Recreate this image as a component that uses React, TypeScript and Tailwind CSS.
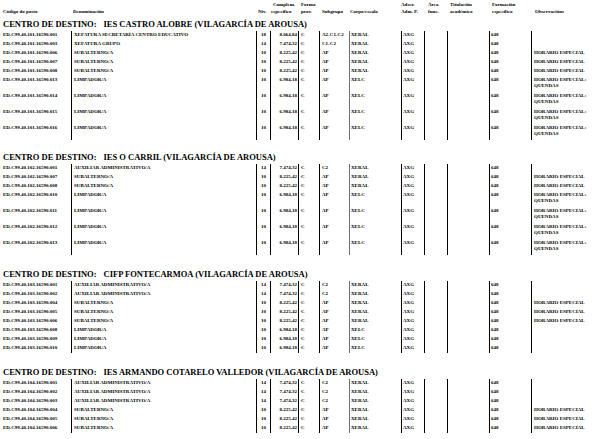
type Row = {
  code: string;
  name: string;
  niv: string;
  comp: string;
  sub: string;
  corpo: string;
  obs: string[];
};

type Section = { centro: string; rows: Row[] };

const aux = (code: string): Row => ({
  code,
  name: 'AUXILIAR ADMINISTRATIVO/A',
  niv: '14',
  comp: '7.474,32',
  sub: 'C2',
  corpo: 'XERAL',
  obs: [],
});

const subal = (code: string): Row => ({
  code,
  name: 'SUBALTERNO/A',
  niv: '10',
  comp: '8.225,42',
  sub: 'AP',
  corpo: 'XERAL',
  obs: ['HORARIO ESPECIAL'],
});

const limp = (code: string, quendas = true): Row => ({
  code,
  name: 'LIMPADOR/A',
  niv: '10',
  comp: '6.984,18',
  sub: 'AP',
  corpo: 'XELC',
  obs: quendas ? ['HORARIO ESPECIAL:', 'QUENDAS'] : [],
});

const sections: Section[] = [
  {
    centro: 'IES CASTRO ALOBRE (VILAGARCÍA DE AROUSA)',
    rows: [
      {
        code: 'ED.C99.40.101.16590.001',
        name: 'XEFATURA SECRETARÍA CENTRO EDUCATIVO',
        niv: '18',
        comp: '8.064,84',
        sub: 'A2-C1-C2',
        corpo: 'XERAL',
        obs: [],
      },
      {
        code: 'ED.C99.40.101.16590.003',
        name: 'XEFATURA GRUPO',
        niv: '14',
        comp: '7.474,32',
        sub: 'C1-C2',
        corpo: 'XERAL',
        obs: [],
      },
      subal('ED.C99.40.101.16590.006'),
      subal('ED.C99.40.101.16590.007'),
      subal('ED.C99.40.101.16590.008'),
      limp('ED.C99.40.101.16590.013'),
      limp('ED.C99.40.101.16590.014'),
      limp('ED.C99.40.101.16590.015'),
      limp('ED.C99.40.101.16590.016'),
    ],
  },
  {
    centro: 'IES O CARRIL (VILAGARCÍA DE AROUSA)',
    rows: [
      aux('ED.C99.40.102.16590.001'),
      subal('ED.C99.40.102.16590.007'),
      subal('ED.C99.40.102.16590.008'),
      limp('ED.C99.40.102.16590.010'),
      limp('ED.C99.40.102.16590.011'),
      limp('ED.C99.40.102.16590.012'),
      limp('ED.C99.40.102.16590.013'),
    ],
  },
  {
    centro: 'CIFP FONTECARMOA (VILAGARCÍA DE AROUSA)',
    rows: [
      aux('ED.C99.40.103.16590.001'),
      aux('ED.C99.40.103.16590.002'),
      subal('ED.C99.40.103.16590.004'),
      subal('ED.C99.40.103.16590.005'),
      subal('ED.C99.40.103.16590.006'),
      limp('ED.C99.40.103.16590.008', false),
      limp('ED.C99.40.103.16590.009', false),
      limp('ED.C99.40.103.16590.010', false),
    ],
  },
  {
    centro: 'IES ARMANDO COTARELO VALLEDOR (VILAGARCÍA DE AROUSA)',
    rows: [
      aux('ED.C99.40.104.16590.001'),
      aux('ED.C99.40.104.16590.002'),
      aux('ED.C99.40.104.16590.003'),
      subal('ED.C99.40.104.16590.004'),
      subal('ED.C99.40.104.16590.005'),
      subal('ED.C99.40.104.16590.006'),
    ],
  },
];

const grid =
  'grid grid-cols-[68px_185px_14px_28px_21px_30px_52px_23px_23px_42px_42px_1fr]';

function DataRow({ row }: { row: Row }) {
  const tall = row.obs.length > 1;
  return (
    <div className={`${grid} ${tall ? 'h-[16px]' : 'h-[9px]'} leading-[6px]`}>
      <div className="pt-[1px] whitespace-nowrap">{row.code}</div>
      <div className="border-l border-black pl-[2px] pt-[1px] whitespace-nowrap">{row.name}</div>
      <div className="border-l border-black pt-[1px] text-center">{row.niv}</div>
      <div className="border-l border-black pr-[1px] pt-[1px] text-right">{row.comp}</div>
      <div className="border-l border-black pl-[2px] pt-[1px]">C</div>
      <div className="border-l border-black pl-[2px] pt-[1px] whitespace-nowrap">{row.sub}</div>
      <div className="border-l-[1.5px] border-gray-500 pl-[1px] pt-[1px]">{row.corpo}</div>
      <div className="border-l border-black pl-[1px] pt-[1px]">AXG</div>
      <div className="border-l border-black"></div>
      <div className="border-l border-black"></div>
      <div className="border-l border-black pl-[1px] pt-[1px]">648</div>
      <div className="border-l-[1.5px] border-black pl-[2px] pt-[1px] whitespace-nowrap">
        {row.obs.map((l) => (
          <div key={l}>{l}</div>
        ))}
      </div>
    </div>
  );
}

function Header() {
  return (
    <div className={`${grid} h-[14px] pt-[1px] leading-[7px]`}>
      <div className="flex items-end">Código do posto</div>
      <div className="flex items-end pl-[2px]">Denominación</div>
      <div className="flex items-end pl-[2px]">Niv.</div>
      <div className="flex flex-col pl-[1px] whitespace-nowrap">
        <span className="pl-[2px]">Complem.</span>
        <span>específico</span>
      </div>
      <div className="flex flex-col pl-[3px]">
        <span>Forma</span>
        <span>prov.</span>
      </div>
      <div className="flex items-end pl-[3px]">Subgrupo</div>
      <div className="flex items-end pl-[1px]">Corpo/escala</div>
      <div className="flex flex-col whitespace-nowrap">
        <span>Adscr.</span>
        <span>Adm. P.</span>
      </div>
      <div className="flex flex-col pl-[4px]">
        <span>Área</span>
        <span>func.</span>
      </div>
      <div className="flex flex-col pl-[3px]">
        <span>Titulación</span>
        <span>académica</span>
      </div>
      <div className="flex flex-col pl-[3px]">
        <span>Formación</span>
        <span>específica</span>
      </div>
      <div className="flex items-end pl-[4px]">Observacións</div>
    </div>
  );
}

export default function App() {
  return (
    <div className="h-[439px] w-[616px] overflow-hidden bg-white pl-[3px] [font-family:'Liberation_Serif','Times_New_Roman',serif] text-[5px] font-bold text-black">
      <Header />
      {sections.map((s, i) => (
        <div key={s.centro} className={i === 0 ? '' : i === 1 ? 'mt-[7px]' : 'mt-[9px]'}>
          <div className="flex h-[17px] items-end pb-[2px] text-[8.5px] leading-[9px] whitespace-nowrap">
            <span>CENTRO DE DESTINO:</span>
            <span className="ml-[7px]">{s.centro}</span>
          </div>
          {s.rows.map((r) => (
            <DataRow key={r.code} row={r} />
          ))}
        </div>
      ))}
    </div>
  );
}
